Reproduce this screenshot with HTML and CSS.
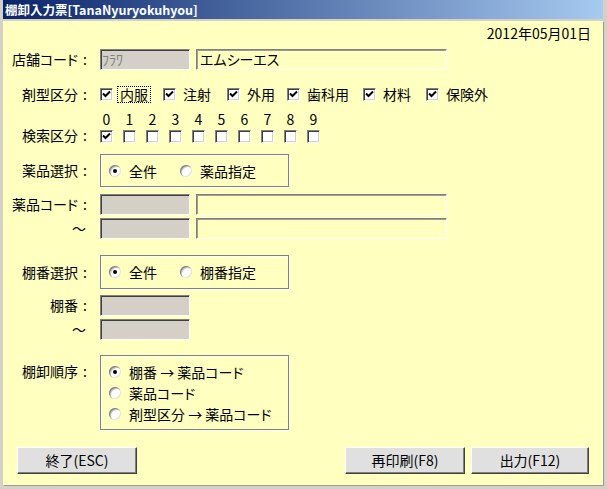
FILE: index.html
```html
<!DOCTYPE html>
<html lang="ja">
<head>
<meta charset="utf-8">
<title>棚卸入力票</title>
<link rel="stylesheet" href="styles.css">
</head>
<body>
<div class="window">
  <div class="titlebar"><span class="title">棚卸入力票[TanaNyuryokuhyou]</span></div>
  <div class="client">
    <div class="date-row">2012年05月01日</div>

    <div class="row row-store">
      <div class="label">店舗コード<span class="colon">:</span></div>
      <div class="field field-short disabled">ﾌﾗﾜ</div>
      <div class="field field-long">エムシーエス</div>
    </div>

    <div class="row row-type">
      <div class="label">剤型区分<span class="colon">:</span></div>
      <div class="checks">
        <div class="check-item"><span class="cb"><svg viewBox="0 0 11 11" width="11" height="11"><polyline points="2,4.5 4.5,7 9,2.5" fill="none" stroke="#000" stroke-width="2"/></svg></span><span class="cb-label focus">内服</span></div>
        <div class="check-item"><span class="cb"><svg viewBox="0 0 11 11" width="11" height="11"><polyline points="2,4.5 4.5,7 9,2.5" fill="none" stroke="#000" stroke-width="2"/></svg></span><span class="cb-label">注射</span></div>
        <div class="check-item"><span class="cb"><svg viewBox="0 0 11 11" width="11" height="11"><polyline points="2,4.5 4.5,7 9,2.5" fill="none" stroke="#000" stroke-width="2"/></svg></span><span class="cb-label">外用</span></div>
        <div class="check-item"><span class="cb"><svg viewBox="0 0 11 11" width="11" height="11"><polyline points="2,4.5 4.5,7 9,2.5" fill="none" stroke="#000" stroke-width="2"/></svg></span><span class="cb-label">歯科用</span></div>
        <div class="check-item"><span class="cb"><svg viewBox="0 0 11 11" width="11" height="11"><polyline points="2,4.5 4.5,7 9,2.5" fill="none" stroke="#000" stroke-width="2"/></svg></span><span class="cb-label">材料</span></div>
        <div class="check-item"><span class="cb"><svg viewBox="0 0 11 11" width="11" height="11"><polyline points="2,4.5 4.5,7 9,2.5" fill="none" stroke="#000" stroke-width="2"/></svg></span><span class="cb-label">保険外</span></div>
      </div>
    </div>

    <div class="row row-search">
      <div class="label label-bottom">検索区分<span class="colon">:</span></div>
      <div class="digit-grid">
        <span class="digit">0</span><span class="digit">1</span><span class="digit">2</span><span class="digit">3</span><span class="digit">4</span>
        <span class="digit">5</span><span class="digit">6</span><span class="digit">7</span><span class="digit">8</span><span class="digit">9</span>
        <span class="cb"><svg viewBox="0 0 11 11" width="11" height="11"><polyline points="2,4.5 4.5,7 9,2.5" fill="none" stroke="#000" stroke-width="2"/></svg></span>
        <span class="cb"></span><span class="cb"></span><span class="cb"></span><span class="cb"></span>
        <span class="cb"></span><span class="cb"></span><span class="cb"></span><span class="cb"></span><span class="cb"></span>
      </div>
    </div>

    <div class="row row-group1">
      <div class="label">薬品選択<span class="colon">:</span></div>
      <div class="group">
        <div class="radio-line">
          <span class="radio-item"><span class="radio on"></span>全件</span>
          <span class="radio-item"><span class="radio"></span>薬品指定</span>
        </div>
      </div>
    </div>

    <div class="row row-code1">
      <div class="label">薬品コード<span class="colon">:</span></div>
      <div class="field field-short disabled"></div>
      <div class="field field-long"></div>
    </div>
    <div class="row row-code2">
      <div class="label label-tilde">～</div>
      <div class="field field-short disabled"></div>
      <div class="field field-long"></div>
    </div>

    <div class="row row-group2">
      <div class="label">棚番選択<span class="colon">:</span></div>
      <div class="group group-tall">
        <div class="radio-line">
          <span class="radio-item"><span class="radio on"></span>全件</span>
          <span class="radio-item"><span class="radio"></span>棚番指定</span>
        </div>
      </div>
    </div>

    <div class="row row-tana1">
      <div class="label">棚番<span class="colon">:</span></div>
      <div class="field field-short disabled"></div>
    </div>
    <div class="row row-tana2">
      <div class="label label-tilde">～</div>
      <div class="field field-short disabled"></div>
    </div>

    <div class="row row-group3">
      <div class="label label-top">棚卸順序<span class="colon">:</span></div>
      <div class="group">
        <div class="radio-line"><span class="radio-item"><span class="radio on"></span>棚番 → 薬品コード</span></div>
        <div class="radio-line"><span class="radio-item"><span class="radio"></span>薬品コード</span></div>
        <div class="radio-line"><span class="radio-item"><span class="radio"></span>剤型区分 → 薬品コード</span></div>
      </div>
    </div>

    <div class="buttons">
      <div class="btn btn-exit">終了(ESC)</div>
      <div class="btn-group">
        <div class="btn">再印刷(F8)</div>
        <div class="btn btn-narrow">出力(F12)</div>
      </div>
    </div>
  </div>
</div>
</body>
</html>
```

FILE: styles.css
```css
* { box-sizing: border-box; }
html, body { margin: 0; padding: 0; }
body {
  width: 607px;
  height: 489px;
  overflow: hidden;
  background: #d4d0c8;
  font-family: "Noto Sans CJK JP", "Noto Sans", sans-serif;
  font-size: 14px;
  color: #000;
  font-feature-settings: "palt";
}
.window {
  width: 607px;
  height: 489px;
  display: flex;
  flex-direction: column;
  background: #d4d0c8;
  padding: 0 4px 4px 3px;
}
.titlebar {
  flex: none;
  height: 19px;
  background: linear-gradient(to right, #0a246a, #a6caf0);
  color: #fff;
  font-weight: bold;
  font-size: 12.5px;
  line-height: 19px;
  padding-left: 2px;
  white-space: nowrap;
}
.client {
  flex: 1;
  margin-top: 2px;
  background: #ffffc0;
  display: flex;
  flex-direction: column;
  box-shadow: 1px 1px 0 #9c9a94;
}
.date-row {
  margin-top: 4px;
  height: 16px;
  line-height: 16px;
  text-align: right;
  padding-right: 12px;
}
.row { display: flex; align-items: center; }
.label {
  flex: none;
  width: 84px;
  margin-right: 13px;
  text-align: right;
  line-height: 15px;
  white-space: nowrap;
}
.colon { margin-left: 5px; }
.label-tilde { padding-right: 1px; }
.label-bottom { align-self: flex-end; }
.label-top { align-self: flex-start; margin-top: 9px; }

.field {
  height: 21px;
  line-height: 18px;
  padding-left: 3px;
  border: 1px solid;
  border-color: #808080 #fff #fff #808080;
  white-space: nowrap;
}
.field.disabled {
  background: #d4d0c8;
  color: #808080;
  box-shadow: inset 1px 1px 0 #404040;
  padding-left: 1px;
}
.field-short { width: 90px; }
.field-long {
  width: 251px;
  margin-left: 6px;
  background: #ffffc0;
  box-shadow: inset 1px 1px 0 #9a9a9a;
}

.row-store { margin-top: 8px; height: 21px; }
.row-type { margin-top: 17px; height: 15px; }
.row-search { margin-top: 9px; align-items: stretch; }
.row-group1 { margin-top: 11px; }
.row-code1 { margin-top: 7px; }
.row-code2 { margin-top: 3px; }
.row-group2 { margin-top: 16px; }
.row-tana1 { margin-top: 6px; }
.row-tana2 { margin-top: 3px; }
.row-group3 { margin-top: 15px; align-items: flex-start; }

.checks {
  display: grid;
  grid-template-columns: 63px 64px 60px 76px 63px auto;
  align-items: center;
}
.check-item { display: flex; align-items: center; }
.cb {
  display: block;
  flex: none;
  width: 13px;
  height: 13px;
  background: #fff;
  border: 1px solid;
  border-color: #808080 #fff #fff #808080;
  box-shadow: inset 1px 1px 0 #404040, inset -1px -1px 0 #d4d0c8;
}
.cb svg { display: block; }
.cb-label {
  margin-left: 5px;
  padding: 0 2px;
  line-height: 15px;
  white-space: nowrap;
}
.cb-label.focus { outline: 1px dotted #000; }

.digit-grid {
  display: grid;
  grid-template-columns: repeat(10, 13px);
  grid-template-rows: 16px 13px;
  column-gap: 10px;
  row-gap: 3px;
}
.digit { text-align: center; line-height: 16px; }

.group {
  width: 189px;
  border: 1px solid #808080;
  box-shadow: 1px 1px 0 #fff, inset 1px 1px 0 #fff;
  padding: 5px 0 5px 8px;
}
.group-tall { padding-bottom: 6px; }
.radio-line {
  display: flex;
  align-items: center;
  height: 21px;
  gap: 23px;
  white-space: nowrap;
}
.radio-item { display: flex; align-items: center; gap: 8px; }
.radio {
  position: relative;
  flex: none;
  width: 12px;
  height: 12px;
  border-radius: 50%;
  background: #fff;
  box-shadow: inset 1px 1px 0 #808080, inset -1px -1px 0 #e4e2dc, inset 2px 2px 0 #c8c6c0;
}
.radio.on::after {
  content: "";
  position: absolute;
  left: 4px;
  top: 4px;
  width: 4px;
  height: 4px;
  border-radius: 50%;
  background: #000;
}

.buttons {
  display: flex;
  margin-top: 17px;
  padding: 0 14px;
}
.btn-group { display: flex; gap: 6px; margin-left: auto; }
.btn {
  width: 120px;
  height: 27px;
  line-height: 25px;
  text-align: center;
  background: #e0e0e0;
  border: 1px solid;
  border-color: #fff #404040 #404040 #fff;
  box-shadow: inset -1px -1px 0 #808080;
  white-space: nowrap;
}
.btn-narrow { width: 118px; }
```
